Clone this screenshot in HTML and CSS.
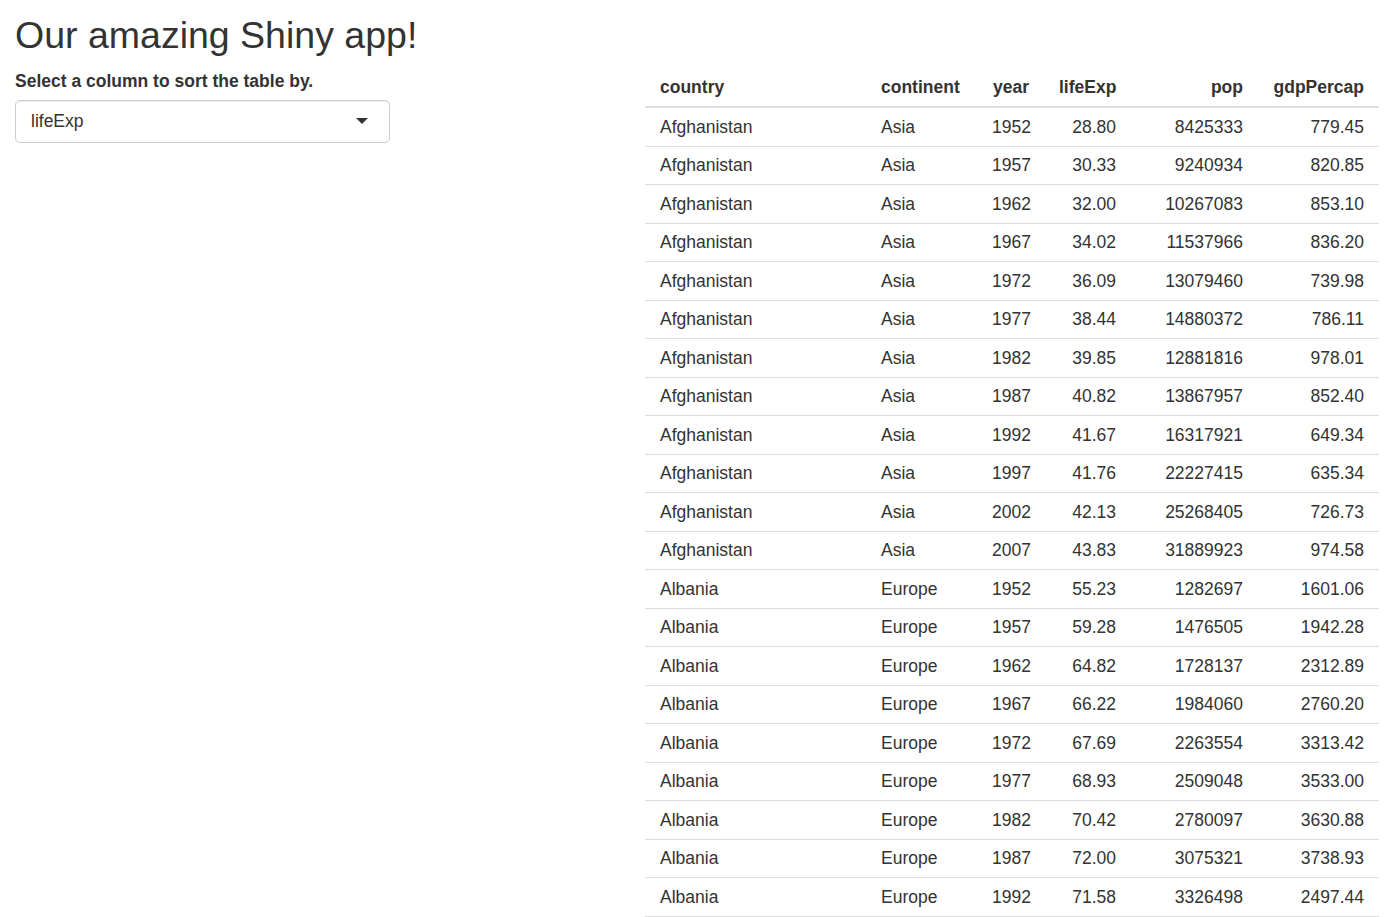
FILE: index.html
```html
<!DOCTYPE html>
<html>
<head>
<meta charset="utf-8">
<title>Our amazing Shiny app!</title>
<link rel="stylesheet" href="styles.css">
</head>
<body>
<div class="page">
  <h2 class="title">Our amazing Shiny app!</h2>
  <div class="row">
    <div class="side">
      <label class="label" for="sortby">Select a column to sort the table by.</label>
      <div class="select" id="sortby">
        <span class="select-value">lifeExp</span>
        <span class="caret"></span>
      </div>
    </div>
    <div class="main">
      <table class="data">
        <colgroup>
          <col class="c-country"><col class="c-continent"><col class="c-year"><col class="c-life"><col class="c-pop"><col class="c-gdp">
        </colgroup>
        <thead>
          <tr><th>country</th><th>continent</th><th class="num">year</th><th class="num">lifeExp</th><th class="num">pop</th><th class="num">gdpPercap</th></tr>
        </thead>
        <tbody>
          <tr><td>Afghanistan</td><td>Asia</td><td class="num">1952</td><td class="num">28.80</td><td class="num">8425333</td><td class="num">779.45</td></tr>
          <tr><td>Afghanistan</td><td>Asia</td><td class="num">1957</td><td class="num">30.33</td><td class="num">9240934</td><td class="num">820.85</td></tr>
          <tr><td>Afghanistan</td><td>Asia</td><td class="num">1962</td><td class="num">32.00</td><td class="num">10267083</td><td class="num">853.10</td></tr>
          <tr><td>Afghanistan</td><td>Asia</td><td class="num">1967</td><td class="num">34.02</td><td class="num">11537966</td><td class="num">836.20</td></tr>
          <tr><td>Afghanistan</td><td>Asia</td><td class="num">1972</td><td class="num">36.09</td><td class="num">13079460</td><td class="num">739.98</td></tr>
          <tr><td>Afghanistan</td><td>Asia</td><td class="num">1977</td><td class="num">38.44</td><td class="num">14880372</td><td class="num">786.11</td></tr>
          <tr><td>Afghanistan</td><td>Asia</td><td class="num">1982</td><td class="num">39.85</td><td class="num">12881816</td><td class="num">978.01</td></tr>
          <tr><td>Afghanistan</td><td>Asia</td><td class="num">1987</td><td class="num">40.82</td><td class="num">13867957</td><td class="num">852.40</td></tr>
          <tr><td>Afghanistan</td><td>Asia</td><td class="num">1992</td><td class="num">41.67</td><td class="num">16317921</td><td class="num">649.34</td></tr>
          <tr><td>Afghanistan</td><td>Asia</td><td class="num">1997</td><td class="num">41.76</td><td class="num">22227415</td><td class="num">635.34</td></tr>
          <tr><td>Afghanistan</td><td>Asia</td><td class="num">2002</td><td class="num">42.13</td><td class="num">25268405</td><td class="num">726.73</td></tr>
          <tr><td>Afghanistan</td><td>Asia</td><td class="num">2007</td><td class="num">43.83</td><td class="num">31889923</td><td class="num">974.58</td></tr>
          <tr><td>Albania</td><td>Europe</td><td class="num">1952</td><td class="num">55.23</td><td class="num">1282697</td><td class="num">1601.06</td></tr>
          <tr><td>Albania</td><td>Europe</td><td class="num">1957</td><td class="num">59.28</td><td class="num">1476505</td><td class="num">1942.28</td></tr>
          <tr><td>Albania</td><td>Europe</td><td class="num">1962</td><td class="num">64.82</td><td class="num">1728137</td><td class="num">2312.89</td></tr>
          <tr><td>Albania</td><td>Europe</td><td class="num">1967</td><td class="num">66.22</td><td class="num">1984060</td><td class="num">2760.20</td></tr>
          <tr><td>Albania</td><td>Europe</td><td class="num">1972</td><td class="num">67.69</td><td class="num">2263554</td><td class="num">3313.42</td></tr>
          <tr><td>Albania</td><td>Europe</td><td class="num">1977</td><td class="num">68.93</td><td class="num">2509048</td><td class="num">3533.00</td></tr>
          <tr><td>Albania</td><td>Europe</td><td class="num">1982</td><td class="num">70.42</td><td class="num">2780097</td><td class="num">3630.88</td></tr>
          <tr><td>Albania</td><td>Europe</td><td class="num">1987</td><td class="num">72.00</td><td class="num">3075321</td><td class="num">3738.93</td></tr>
          <tr><td>Albania</td><td>Europe</td><td class="num">1992</td><td class="num">71.58</td><td class="num">3326498</td><td class="num">2497.44</td></tr>
        </tbody>
      </table>
    </div>
  </div>
</div>
</body>
</html>
```
FILE: styles.css
```css
html, body {
  margin: 0;
  padding: 0;
  background: #fff;
}
body {
  font-family: "Liberation Sans", Arial, Helvetica, sans-serif;
  font-size: 17.5px;
  line-height: 25px;
  color: #333;
}
.page {
  padding: 15px 8px 0 15px;
}
.title {
  margin: 0 0 12.5px 0;
  font-size: 37.5px;
  line-height: 41.25px;
  font-weight: 500;
  color: #333;
}
.row {
  display: flex;
  align-items: flex-start;
}
.side {
  width: 630px;
  flex: 0 0 630px;
}
.label {
  display: block;
  font-weight: bold;
  margin-bottom: 6.25px;
}
.select {
  box-sizing: border-box;
  width: 375px;
  height: 42.5px;
  border: 1px solid #ccc;
  border-radius: 5px;
  box-shadow: inset 0 1px 1px rgba(0,0,0,0.075);
  padding: 0 21px 0 15px;
  display: flex;
  align-items: center;
  justify-content: space-between;
  background: #fff;
}
.select-value {
  color: #333;
}
.caret {
  width: 0;
  height: 0;
  border-style: solid;
  border-width: 6px 6px 0 6px;
  border-color: #333 transparent transparent transparent;
}
.main {
  flex: 0 0 734px;
}
.data {
  width: 734px;
  table-layout: fixed;
  border-collapse: collapse;
  border-spacing: 0;
}
.c-country { width: 221px; }
.c-continent { width: 111px; }
.c-year { width: 67px; }
.c-life { width: 87px; }
.c-pop { width: 127px; }
.c-gdp { width: 121px; }
.data th,
.data td {
  padding: 6.25px 15px;
  line-height: 25px;
  text-align: left;
  white-space: nowrap;
  vertical-align: top;
}
.data th {
  font-weight: bold;
  border-bottom: 2px solid #ddd;
}
.data td {
  border-top: 1px solid #ddd;
}
.data tbody tr:last-child td {
  border-bottom: 1px solid #ddd;
}
.data .num {
  text-align: right;
}
```
